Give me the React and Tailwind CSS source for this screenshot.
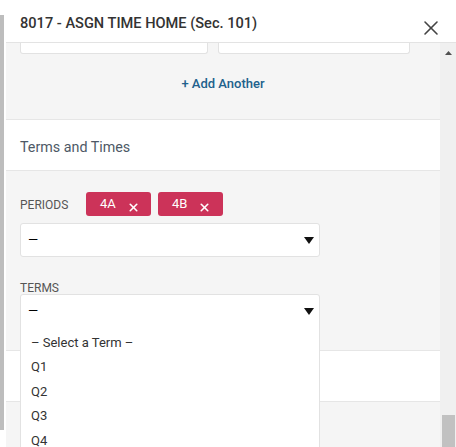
import { X } from 'lucide-react';

const terms = ['– Select a Term –', 'Q1', 'Q2', 'Q3', 'Q4'];

function Pill({ label }) {
  return (
    <span className="flex h-[24px] w-[65px] items-center rounded-[3px] bg-[#cc3359] pl-[14px] text-[13px] text-white">
      <span>{label}</span>
      <X className="ml-[11px] mt-[7px] h-[13px] w-[13px]" strokeWidth={3} />
    </span>
  );
}

function Caret() {
  return (
    <svg width="10" height="7" viewBox="0 0 10 7" className="shrink-0">
      <path d="M0 0h10L5 7z" fill="#111" />
    </svg>
  );
}

export default function App() {
  return (
    <div className="relative flex h-[447px] w-[456px] overflow-hidden bg-white font-['Roboto',sans-serif]">
      {/* left page edge */}
      <div className="w-[6px] shrink-0">
        <div className="mt-[15px] h-[415px] w-[4px] bg-[#bdbdbd]" />
      </div>

      <div className="flex min-w-0 flex-1 flex-col">
        {/* Header */}
        <div className="flex h-[43px] shrink-0 items-start justify-between border-b border-[#e3e3e3] bg-white pl-[14px] pr-[13px]">
          <h1 className="mt-[13px] text-[14.6px] font-medium text-[#333]">8017 - ASGN TIME HOME (Sec. 101)</h1>
          <X className="mt-[16px] h-[24px] w-[24px] text-[#444]" strokeWidth={1.6} />
        </div>

        <div className="flex flex-1">
          {/* Body */}
          <div className="flex min-w-0 flex-1 flex-col bg-[#f5f5f5]">
            <div className="flex gap-[10px] pl-[14px]">
              <div className="h-[11px] w-[188px] rounded-b-[3px] border border-t-0 border-[#e2e2e2] bg-white" />
              <div className="h-[11px] w-[192px] rounded-b-[3px] border border-t-0 border-[#e2e2e2] bg-white" />
            </div>

            <div className="flex h-[65px] items-center justify-center pb-[5px]">
              <span className="text-[13px] font-medium text-[#21618c]">+ Add Another</span>
            </div>

            <div className="flex h-[52px] items-center border-y border-[#e6e6e6] bg-white pl-[14px] pt-[6px]">
              <span className="text-[14.3px] text-[#4e5966]">Terms and Times</span>
            </div>

            <div className="px-[14px] pt-[21px]">
              <div className="flex items-center">
                <span className="w-[66px] pt-[1px] text-[12px] text-[#555]">PERIODS</span>
                <div className="flex gap-[7px]">
                  <Pill label="4A" />
                  <Pill label="4B" />
                </div>
              </div>
              <div className="mt-[7px] flex h-[34px] w-[300px] items-center justify-between rounded-[3px] border border-[#e2e2e2] bg-white pl-[7px] pr-[5px]">
                <span className="text-[13px] text-black">—</span>
                <Caret />
              </div>

              <div className="mt-[25px] text-[12px] leading-[12px] text-[#555]">TERMS</div>
              <div className="flex h-[34px] w-[300px] items-center justify-between rounded-t-[3px] border border-[#e2e2e2] bg-white pl-[7px] pr-[5px]">
                <span className="text-[13px] text-black">—</span>
                <Caret />
              </div>
            </div>

            <div className="mt-[22px] h-[52px] border-y border-[#e6e6e6] bg-white" />
          </div>

          {/* Scrollbar */}
          <div className="flex w-[16px] shrink-0 flex-col items-center justify-between bg-[#f0f0f0]">
            <svg width="7" height="4" viewBox="0 0 7 4" className="mt-[8px]">
              <path d="M0 4h7L3.5 0z" fill="#505050" />
            </svg>
            <div className="h-[32px] w-[13px] bg-[#c1c1c1]" />
          </div>
        </div>
      </div>

      {/* Open terms menu */}
      <div className="absolute left-[20px] top-[326px] w-[300px] border-x border-[#e2e2e2] bg-white pt-[3px]">
        {terms.map((t) => (
          <div key={t} className="flex h-[24.5px] items-center pl-[10px] pt-[2px] text-[13px] text-[#333]">
            {t}
          </div>
        ))}
      </div>
    </div>
  );
}
